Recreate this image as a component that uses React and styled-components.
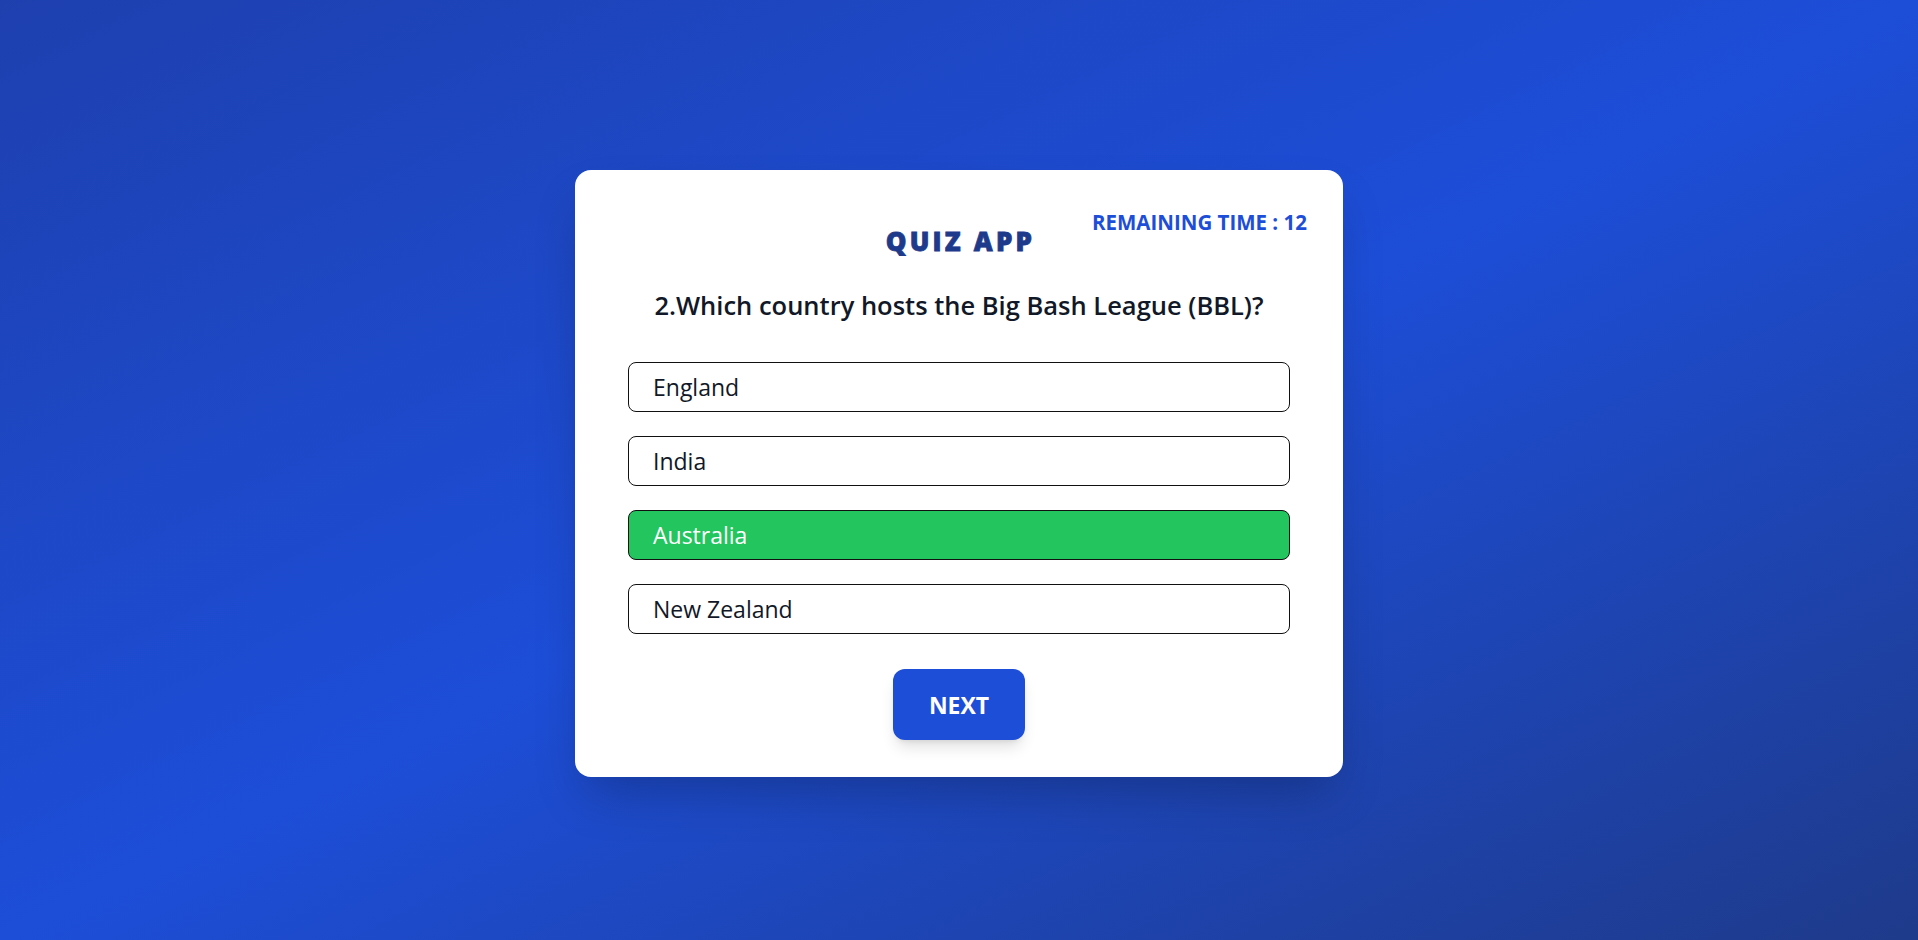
import React from "react";
import styled, { createGlobalStyle } from "styled-components";

const GlobalStyle = createGlobalStyle`
  * { box-sizing: border-box; }
  html, body { margin: 0; padding: 0; }
  body {
    font-family: "Open Sans", "Noto Sans", "Liberation Sans", sans-serif;
  }
`;

const Page = styled.main`
  min-height: 100vh;
  padding-top: 7px;
  display: flex;
  align-items: center;
  justify-content: center;
  background: linear-gradient(to bottom right, #1e40af, #1d4ed8, #1e3a8a);
`;

const Card = styled.section`
  width: 768px;
  background: #ffffff;
  border-radius: 16px;
  padding: 38px 36px 37px;
  box-shadow: 0 25px 50px -12px rgba(0, 0, 0, 0.25);
  display: flex;
  flex-direction: column;
  align-items: center;
`;

const Header = styled.header`
  width: 100%;
  display: grid;
  grid-template-columns: 1fr auto 1fr;
  align-items: start;
`;

const Title = styled.h1`
  grid-column: 2;
  margin: 17px -3px 0 0;
  font-family: "Open Sans", "Noto Sans", sans-serif;
  font-size: 26px;
  line-height: 32px;
  font-weight: 800;
  letter-spacing: 3.2px;
  -webkit-text-stroke: 0.8px #1e3a8a;
  color: #1e3a8a;
`;

const Timer = styled.div`
  grid-column: 3;
  justify-self: end;
  font-size: 20.5px;
  line-height: 28px;
  font-weight: 700;
  color: #1d4ed8;
  white-space: nowrap;
`;

const Question = styled.h2`
  margin: 31px 0 0;
  font-size: 25.5px;
  line-height: 34px;
  font-weight: 600;
  color: #111827;
  text-align: center;
`;

const Options = styled.ul`
  list-style: none;
  margin: 40px 0 0;
  padding: 0;
  width: 662px;
  display: flex;
  flex-direction: column;
  gap: 24px;
`;

const Option = styled.li`
  height: 50px;
  display: flex;
  align-items: center;
  padding: 0 24px;
  border: 1px solid #111111;
  border-radius: 8px;
  font-size: 23px;
  color: ${(p) => (p.$correct ? "#ffffff" : "#111827")};
  background: ${(p) => (p.$correct ? "#22c55e" : "#ffffff")};
`;

const NextButton = styled.button`
  margin-top: 35px;
  width: 132px;
  height: 71px;
  border: none;
  border-radius: 12px;
  background: #1d4ed8;
  color: #ffffff;
  font-family: inherit;
  font-size: 23px;
  font-weight: 700;
  box-shadow: 0 10px 15px -3px rgba(0, 0, 0, 0.12), 0 4px 6px -4px rgba(0, 0, 0, 0.12);
  cursor: pointer;
`;

const options = ["England", "India", "Australia", "New Zealand"];

export default function App() {
  return (
    <>
      <GlobalStyle />
      <Page>
        <Card>
          <Header>
            <Title>QUIZ APP</Title>
            <Timer>REMAINING TIME : 12</Timer>
          </Header>
          <Question>2.Which country hosts the Big Bash League (BBL)?</Question>
          <Options>
            {options.map((o) => (
              <Option key={o} $correct={o === "Australia"}>
                {o}
              </Option>
            ))}
          </Options>
          <NextButton>NEXT</NextButton>
        </Card>
      </Page>
    </>
  );
}
